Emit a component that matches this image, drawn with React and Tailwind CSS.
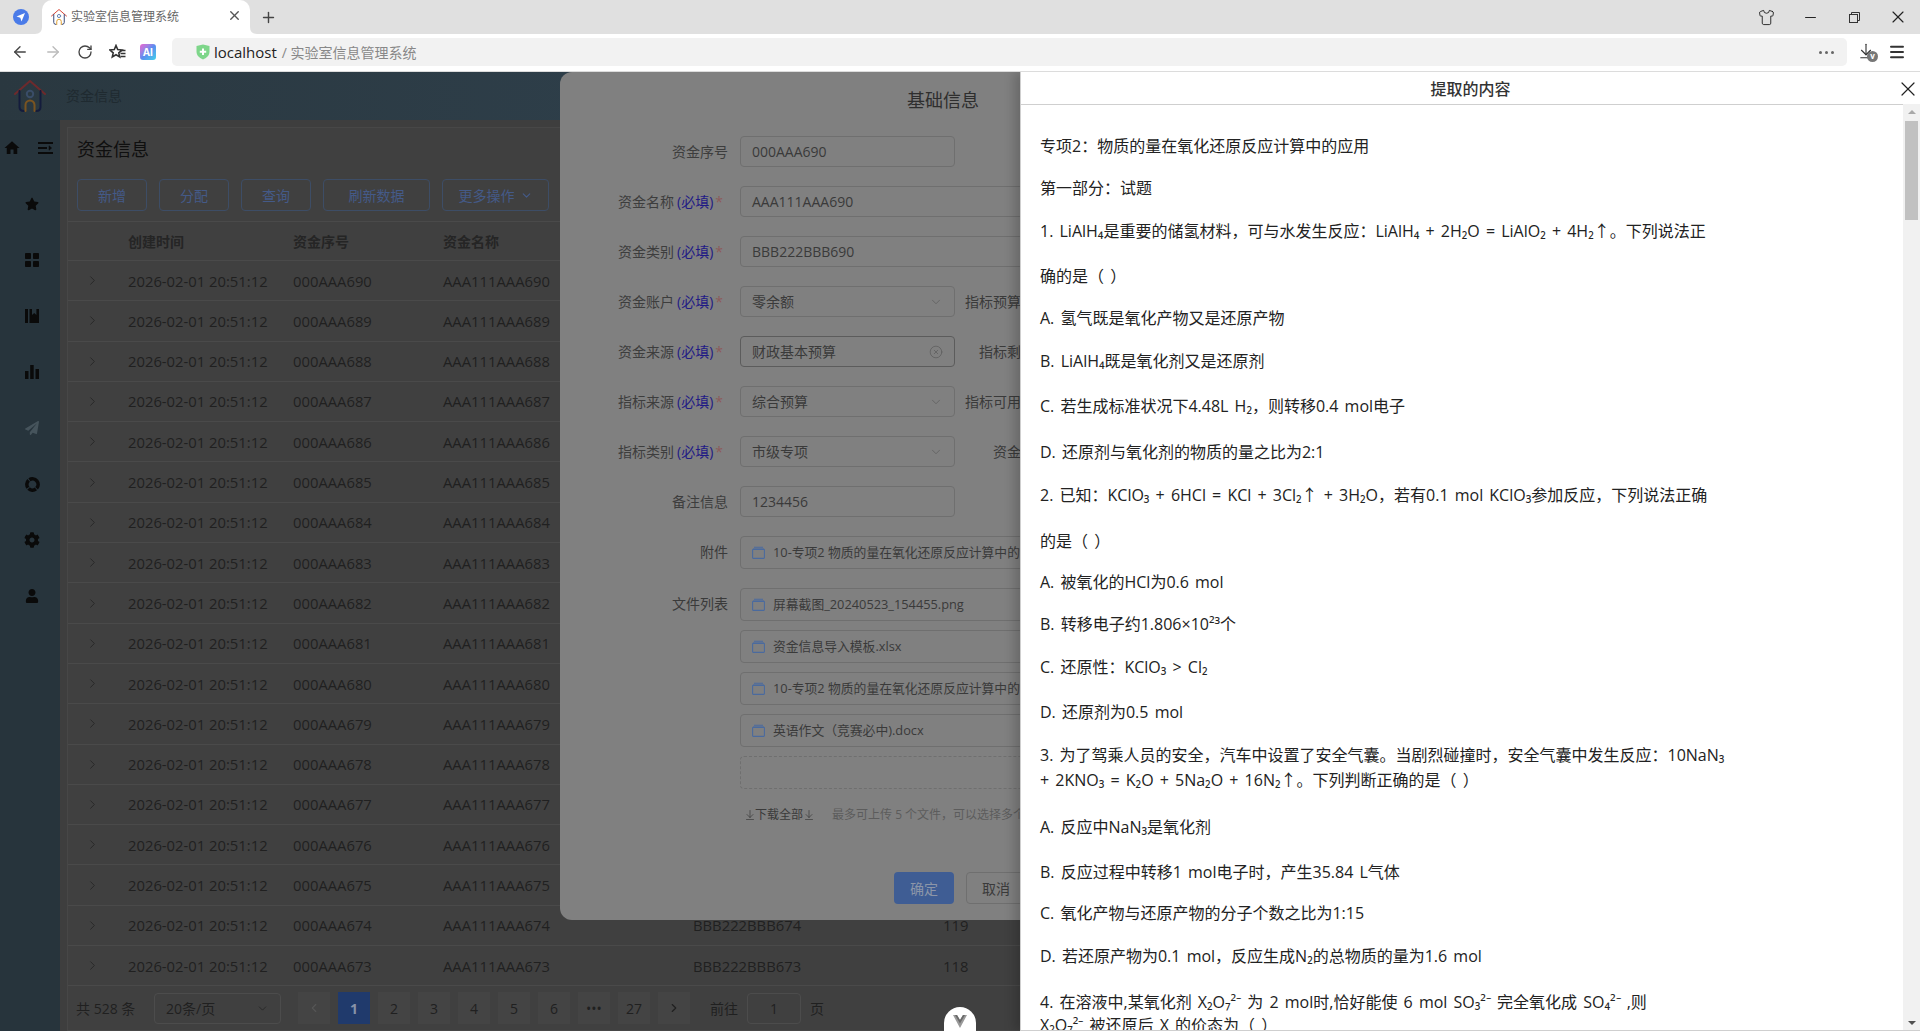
import { ArrowLeft, ArrowRight, RotateCw, Plus, X, Shirt, Minus, Menu, ChevronRight, ChevronLeft, ChevronDown, CircleX, ArrowDownToLine } from "lucide-react"
import { FaStar, FaCog, FaUser, FaPaperPlane } from "react-icons/fa"
import { MdHome } from "react-icons/md"

const Logo = ({ size, roof, wall, door, dot }) => (
    <svg width={size} height={size} viewBox="0 0 32 32" fill="none" strokeWidth="2" strokeLinecap="round">
        <path d="M1 14 L16 1 L31 14" stroke={roof} />
        <path d="M5.5 11 V27 Q5.5 31 10 31 M26.5 11 V27 Q26.5 31 22 31" stroke={wall} />
        <path d="M11.5 31 V25 A4.5 4.5 0 0 1 20.5 25 V31" stroke={door} />
        <circle cx="16" cy="14" r="3.2" stroke={dot} />
    </svg>
)

const TabStrip = () => (
    <div className="h-[34px] bg-[#e0e0e0] flex items-end relative shrink-0">
        <div className="w-[42px] h-[34px] flex items-center justify-center">
            <svg width="16" height="16" viewBox="0 0 16 16">
                <circle cx="8" cy="8" r="8" fill="#4a7be8" />
                <path d="M12 4 L3.5 7.5 L7.3 8.7 L8.5 12.5 Z" fill="#fff" />
            </svg>
        </div>
        <div className="relative w-[208px] h-[34px] bg-white rounded-t-[10px] flex items-center pl-[9px] pr-[8px]">
            <svg className="absolute left-[-7px] bottom-0" width="7" height="7" viewBox="0 0 7 7"><path d="M7 0 V7 H0 Q7 7 7 0Z" fill="#fff" /></svg>
            <svg className="absolute right-[-7px] bottom-0" width="7" height="7" viewBox="0 0 7 7"><path d="M0 0 V7 H7 Q0 7 0 0Z" fill="#fff" /></svg>
            <Logo size={16} roof="#d9483b" wall="#3a4a78" door="#e0a030" dot="#6a86b8" />
            <span className="ml-[4px] mb-[1px] text-[12px] text-[#666]">实验室信息管理系统</span>
            <X size={15} strokeWidth={2.2} className="ml-auto mb-[4px] text-[#555]" />
        </div>
        <div className="ml-[10px] h-[34px] flex items-center"><Plus size={17} strokeWidth={2} className="text-[#444]" /></div>
        <div className="ml-auto h-[34px] flex items-center text-[#222]">
            <div className="w-[44px] flex justify-center"><Shirt size={17} strokeWidth={1.3} /></div>
            <div className="w-[44px] flex justify-center"><Minus size={17} strokeWidth={1.4} /></div>
            <div className="w-[44px] flex justify-center">
                <svg width="11" height="11" viewBox="0 0 11 11" fill="none" stroke="#333"><rect x="0.5" y="2.5" width="8" height="8" /><path d="M2.5 2.5 V0.5 H10.5 V8.5 H8.5" /></svg>
            </div>
            <div className="w-[44px] flex justify-center"><X size={20} strokeWidth={1.4} /></div>
        </div>
    </div>
)

const Toolbar = () => (
    <div className="h-[38px] bg-white border-b border-[#dcdcdc] pb-[1px] flex items-center shrink-0">
        <div className="w-[172px] flex items-center pl-[11px] text-[#444]">
            <ArrowLeft size={18} strokeWidth={1.8} />
            <ArrowRight size={18} strokeWidth={1.8} className="ml-[15px] text-[#bbb]" />
            <RotateCw size={16} strokeWidth={2} className="ml-[15px]" />
            <svg className="ml-[16px]" width="17" height="16" viewBox="0 0 17 16" fill="none" stroke="#333" strokeWidth="1.6">
                <path d="M7 1.5 L8.7 5.5 L13 6 L9.8 8.8 L10.7 13 L7 10.8 L3.3 13 L4.2 8.8 L1 6 L5.3 5.5 Z" />
                <path d="M11 6.5 H16.5 M11.5 9.5 H16.5 M11.5 12.5 H16.5" />
            </svg>
            <div className="ml-[14px] w-[16px] h-[16px] rounded-[3px] bg-gradient-to-br from-[#e85fd0] via-[#5a8cf0] to-[#3ed0e8] flex items-center justify-center text-white text-[10px] font-bold leading-none">AI</div>
        </div>
        <div className="w-[1675px] h-[28px] bg-[#f2f2f2] rounded-[5px] flex items-center pl-[24px]">
            <svg width="14" height="16" viewBox="0 0 14 16">
                <path d="M0.5 2 L7 0.5 L13.5 2 V8 Q13.5 13 7 15.5 Q0.5 13 0.5 8 Z" fill="#7ed68a" />
                <path d="M7 4.5 V11 M3.8 7.8 H10.2" stroke="#fff" strokeWidth="2" />
            </svg>
            <span className="ml-[4px] text-[15px] text-[#222]">localhost</span>
            <span className="ml-[5px] text-[14px] text-[#888]">/ 实验室信息管理系统</span>
            <div className="ml-auto mr-[13px] flex gap-[3px]">
                <i className="w-[3px] h-[3px] rounded-full bg-[#666]" />
                <i className="w-[3px] h-[3px] rounded-full bg-[#666]" />
                <i className="w-[3px] h-[3px] rounded-full bg-[#666]" />
            </div>
        </div>
        <div className="flex-1 flex items-center pl-[10px]">
            <div className="relative w-[20px] h-[20px]">
                <ArrowDownToLine size={18} strokeWidth={1.5} className="text-[#333]" />
                <span className="absolute right-[-1px] bottom-0 w-[11px] h-[11px] rounded-full bg-[#777] text-white text-[8px] font-bold leading-[10px] text-center">v</span>
            </div>
            <Menu size={18} strokeWidth={2.6} className="ml-[11px] text-[#333]" />
        </div>
    </div>
)

const BookIcon = () => (
    <svg width="14" height="14" viewBox="0 0 14 14" fill="#0a0a0a">
        <rect x="0" y="0" width="3" height="14" />
        <path d="M4.5 0 H14 V14 H4.5 Z M7 0 V6 L9.2 4 L11.4 6 V0 Z" fillRule="evenodd" />
    </svg>
)

const BarsIcon = () => (
    <svg width="14" height="14" viewBox="0 0 14 14" fill="#0a0a0a">
        <rect x="0" y="6" width="3.5" height="8" />
        <rect x="5.2" y="0" width="3.5" height="14" />
        <rect x="10.5" y="4" width="3.5" height="10" />
    </svg>
)

const GridIcon = () => (
    <svg width="14" height="14" viewBox="0 0 14 14" fill="#0a0a0a">
        <rect x="0" y="0" width="6" height="6" rx="0.8" />
        <rect x="8" y="0" width="6" height="6" rx="0.8" />
        <rect x="0" y="8" width="6" height="6" rx="0.8" />
        <rect x="8" y="8" width="6" height="6" rx="0.8" />
    </svg>
)

const RingIcon = () => (
    <svg width="15" height="15" viewBox="0 0 15 15" fill="none" stroke="#0a0a0a" strokeWidth="3.6">
        <circle cx="7.5" cy="7.5" r="5.6" strokeDasharray="7.8 1" transform="rotate(-40 7.5 7.5)" />
    </svg>
)

const Sidebar = () => {
    const items = [
        <FaStar size={14} />,
        <GridIcon />,
        <BookIcon />,
        <BarsIcon />,
        <FaPaperPlane size={14} className="text-[#46545c]" />,
        <RingIcon />,
        <FaCog size={16} />,
        <FaUser size={14} />,
    ]
    return (
        <div className="w-[60px] shrink-0 bg-[#27343c] text-[#0a0a0a]">
            <div className="h-14 flex items-center justify-between pl-[3px] pr-[7px]">
                <MdHome size={18} />
                <svg width="15" height="12" viewBox="0 0 15 12" fill="none" stroke="#0a0a0a" strokeWidth="2">
                    <path d="M0 1 H15 M0 6 H9 M0 11 H15" />
                    <path d="M11 3.8 L13.6 6 L11 8.2 Z" fill="#0a0a0a" strokeWidth="0.5" />
                </svg>
            </div>
            {items.map((icon, i) => (
                <div key={i} className="h-14 flex items-center justify-center pl-1">{icon}</div>
            ))}
        </div>
    )
}

const rows = Array.from({ length: 18 }, (_, i) => 690 - i)
const pages = ["2", "3", "4", "5", "6", "•••", "27"]

const FundTable = () => (
    <div className="flex-1 ml-[7px] mt-[7px] bg-[#404040] border border-[#474747] text-[#202020] overflow-hidden">
        <div className="h-[43px] flex items-center pl-[9px] text-[18px] text-[#0f0f0f]">资金信息</div>
        <div className="mt-[8px] h-[32px] pl-[9px] flex gap-3 text-[14px] text-[#445a88]">
            <div className="w-[70px] flex items-center justify-center border border-[#3d4d66] rounded-[4px]">新增</div>
            <div className="w-[70px] flex items-center justify-center border border-[#3d4d66] rounded-[4px]">分配</div>
            <div className="w-[70px] flex items-center justify-center border border-[#3d4d66] rounded-[4px]">查询</div>
            <div className="w-[107px] flex items-center justify-center border border-[#3d4d66] rounded-[4px]">刷新数据</div>
            <div className="w-[107px] flex items-center justify-center border border-[#3d4d66] rounded-[4px]">更多操作<ChevronDown size={13} className="ml-[5px]" /></div>
        </div>
        <div className="mt-[10px] h-[40px] grid grid-cols-[60px_165px_150px_250px_250px_1fr] items-center border-y border-[#4a4a4a] text-[14px] font-bold text-[#252525]">
            <span />
            <span>创建时间</span>
            <span>资金序号</span>
            <span>资金名称</span>
            <span>资金类别</span>
            <span>指标预算</span>
        </div>
        {rows.map((n) => (
            <div key={n} className="h-[40.3px] grid grid-cols-[60px_165px_150px_250px_250px_1fr] items-center border-b border-[#4a4a4a] text-[14.8px]">
                <ChevronRight size={15} strokeWidth={1.2} className="ml-[17px]" />
                <span>2026-02-01 20:51:12</span>
                <span>000AAA{n}</span>
                <span>AAA111AAA{n}</span>
                <span>BBB222BBB{n}</span>
                <span>{n - 555}</span>
            </div>
        ))}
        <div className="mt-[6px] flex items-center h-[32px] pl-[8px] text-[14px]">
            <span className="w-[78px]">共 528 条</span>
            <div className="w-[127px] h-[31px] border border-[#4c4c4c] rounded-[4px] flex items-center justify-between px-[11px]">
                <span>20条/页</span>
                <ChevronDown size={13} strokeWidth={1.3} />
            </div>
            <div className="ml-[17px] flex gap-2">
                <div className="w-8 h-8 bg-[#444] flex items-center justify-center text-[#555]"><ChevronLeft size={14} /></div>
                <div className="w-8 h-8 bg-[#203a6c] flex items-center justify-center text-[#8793a8] font-bold">1</div>
                {pages.map((p) => (
                    <div key={p} className="w-8 h-8 bg-[#444] flex items-center justify-center font-normal">{p}</div>
                ))}
                <div className="w-8 h-8 bg-[#444] flex items-center justify-center"><ChevronRight size={14} /></div>
            </div>
            <span className="ml-[20px]">前往</span>
            <div className="ml-[9px] w-[54px] h-[31px] border border-[#4c4c4c] rounded-[4px] flex items-center justify-center">1</div>
            <span className="ml-[9px]">页</span>
        </div>
    </div>
)

const Required = () => (
    <>
        <span className="ml-[3px] text-[#1f1a85]">(必填)</span>
        <span className="ml-[2px] text-[#8d5a5a]">*</span>
        <span className="w-[5px]" />
    </>
)

const Field = ({ label, required, wide, side, sideGap, clear, select, value }) => (
    <div className="flex items-center h-[31px] mb-[19px] whitespace-nowrap">
        <div className="w-[168px] shrink-0 flex justify-end items-center text-[#3d3d3d]">
            {label}
            {required && <Required />}
        </div>
        <div className={`ml-3 h-[31px] shrink-0 border rounded-[4px] flex items-center pl-[11px] pr-[11px] ${wide ? "w-[400px]" : "w-[215px]"} ${clear ? "border-[#5c5c5c]" : "border-[#6f6f6f]"}`}>
            <span>{value}</span>
            {select && <ChevronDown size={14} strokeWidth={1.2} className="ml-auto text-[#5a5a5a]" />}
            {clear && <CircleX size={14} strokeWidth={1.2} className="ml-auto text-[#5a5a5a]" />}
        </div>
        {side && <span className={`shrink-0 ${sideGap}`}>{side}</span>}
    </div>
)

const FileIcon = () => (
    <svg width="13" height="13" viewBox="0 0 13 13" fill="none" stroke="#4a6a9e" strokeWidth="1.1" className="shrink-0">
        <rect x="0.6" y="3.4" width="11.8" height="9" rx="0.6" />
        <path d="M2 1.2 H11 M1 3 H12" />
    </svg>
)

const FileRow = ({ name, cls }) => (
    <div className={`h-[33px] w-[400px] ml-[180px] border border-[#6f6f6f] rounded-[4px] flex items-center pl-[11px] text-[12.8px] whitespace-nowrap overflow-hidden ${cls}`}>
        <FileIcon />
        <span className="ml-[8px]">{name}</span>
    </div>
)

const longFile = "10-专项2 物质的量在氧化还原反应计算中的应用.pdf"

const Dialog = () => (
    <div className="absolute left-[560px] top-0 w-[460px] h-[848px] bg-[#808080] rounded-l-[12px] overflow-hidden text-[14px] text-[#3a3a3a]">
        <div className="h-[56px] flex items-center pl-[347px] text-[18px] text-[#2e2e2e] whitespace-nowrap">基础信息</div>
        <div className="pt-2">
            <Field label="资金序号" value="000AAA690" />
            <Field label="资金名称" required wide value="AAA111AAA690" />
            <Field label="资金类别" required wide value="BBB222BBB690" />
            <Field label="资金账户" required select value="零余额" side="指标预算金额" sideGap="ml-[10px]" />
            <Field label="资金来源" required clear value="财政基本预算" side="指标剩余金额" sideGap="ml-[24px]" />
            <Field label="指标来源" required select value="综合预算" side="指标可用金额" sideGap="ml-[10px]" />
            <Field label="指标类别" required select value="市级专项" side="资金状态" sideGap="ml-[38px]" />
            <Field label="备注信息" value="1234456" />
            <div className="relative">
                <span className="absolute left-[104px] top-[5px] w-[64px] text-right">附件</span>
                <FileRow name={longFile} cls="mb-[19px]" />
                <span className="absolute left-[104px] top-[57px] w-[64px] text-right">文件列表</span>
                <FileRow name="屏幕截图_20240523_154455.png" cls="mb-[9px]" />
                <FileRow name="资金信息导入模板.xlsx" cls="mb-[9px]" />
                <FileRow name={longFile} cls="mb-[9px]" />
                <FileRow name="英语作文（竞赛必中).docx" cls="mb-[9px]" />
                <div className="h-[33px] w-[400px] ml-[180px] border border-dashed border-[#6f6f6f] rounded-[4px]" />
            </div>
            <div className="mt-[16px] h-[20px] ml-[184px] flex items-center whitespace-nowrap">
                <ArrowDownToLine size={12} strokeWidth={1.4} className="shrink-0" />
                <span className="text-[12px] ml-[-1px]">下载全部</span>
                <ArrowDownToLine size={12} strokeWidth={1.4} className="shrink-0" />
                <span className="ml-[17px] text-[12px] text-[#5c5c5c]">最多可上传 5 个文件，可以选择多个文件上传</span>
            </div>
            <div className="mt-[47px] ml-[334px] flex gap-3">
                <div className="w-[60px] h-[32px] shrink-0 bg-[#3f5d94] rounded-[4px] flex items-center justify-center text-[#8c96a8]">确定</div>
                <div className="w-[60px] h-[32px] shrink-0 border border-[#6f6f6f] rounded-[4px] flex items-center justify-center">取消</div>
            </div>
        </div>
    </div>
)

const lines = [
    { t: "专项2：物质的量在氧化还原反应计算中的应用", c: "mt-[29px]" },
    { t: "第一部分：试题", c: "mt-[17px]" },
    { t: "1. LiAlH₄是重要的储氢材料，可与水发生反应：LiAlH₄ + 2H₂O = LiAlO₂ + 4H₂↑。下列说法正", c: "mt-[18px]" },
    { t: "确的是（ ）", c: "mt-[20px]" },
    { t: "A. 氢气既是氧化产物又是还原产物", c: "mt-[17px]" },
    { t: "B. LiAlH₄既是氧化剂又是还原剂", c: "mt-[18px]" },
    { t: "C. 若生成标准状况下4.48L H₂，则转移0.4 mol电子", c: "mt-[20px]" },
    { t: "D. 还原剂与氧化剂的物质的量之比为2:1", c: "mt-[21px]" },
    { t: "2. 已知：KClO₃ + 6HCl = KCl + 3Cl₂↑ + 3H₂O，若有0.1 mol KClO₃参加反应，下列说法正确", c: "mt-[18px]" },
    { t: "的是（ ）", c: "mt-[21px]" },
    { t: "A. 被氧化的HCl为0.6 mol", c: "mt-[16px]" },
    { t: "B. 转移电子约1.806×10²³个", c: "mt-[17px]" },
    { t: "C. 还原性：KClO₃ > Cl₂", c: "mt-[18px]" },
    { t: "D. 还原剂为0.5 mol", c: "mt-[20px]" },
    { t: "3. 为了驾乘人员的安全，汽车中设置了安全气囊。当剧烈碰撞时，安全气囊中发生反应：10NaN₃", c: "mt-[18px]" },
    { t: "+ 2KNO₃ = K₂O + 5Na₂O + 16N₂↑。下列判断正确的是（ ）", c: "mt-0" },
    { t: "A. 反应中NaN₃是氧化剂", c: "mt-[22px]" },
    { t: "B. 反应过程中转移1 mol电子时，产生35.84 L气体", c: "mt-[20px]" },
    { t: "C. 氧化产物与还原产物的分子个数之比为1:15", c: "mt-[16px]" },
    { t: "D. 若还原产物为0.1 mol，反应生成N₂的总物质的量为1.6 mol", c: "mt-[18px]" },
    { t: "4. 在溶液中,某氧化剂 X₂O₇²⁻ 为 2 mol时,恰好能使 6 mol SO₃²⁻ 完全氧化成 SO₄²⁻ ,则", c: "mt-[21px]" },
    { t: "X₂O₇²⁻ 被还原后 X 的价态为（ ）", c: "mt-[-2px]" },
]

const Panel = () => (
    <div className="absolute left-[1020px] top-0 bottom-0 w-[900px] bg-white border-l border-b border-[#cfcfcf] shadow-[-6px_0_10px_rgba(0,0,0,0.18)] flex flex-col">
        <div className="h-[32px] pt-[2px] shrink-0 flex items-center justify-center relative text-[16px] font-medium text-[#333]">
            <span>提取的内容</span>
            <X size={24} strokeWidth={1.2} className="absolute right-0 top-[5px] text-[#222]" />
        </div>
        <div className="flex-1 min-h-0 flex">
            <div className="flex-1 border-t border-[#cfcfcf] pl-[19px] overflow-hidden text-[16px] text-[#222] whitespace-nowrap [word-spacing:2px]">
                {lines.map((l) => (
                    <p key={l.t} className={`leading-[25px] ${l.c}`}>{l.t}</p>
                ))}
            </div>
            <div className="w-[17px] bg-[#f1f1f1] flex flex-col items-center relative">
                <div className="mt-[6px] w-0 h-0 border-x-[4px] border-x-transparent border-b-[4px] border-b-[#a8a8a8]" />
                <div className="mt-[7px] w-[13px] h-[99px] bg-[#c1c1c1]" />
                <div className="mt-auto mb-[5px] w-0 h-0 border-x-[4px] border-x-transparent border-t-[4px] border-t-[#505050]" />
            </div>
        </div>
    </div>
)

const DevtoolsBubble = () => (
    <div className="absolute left-[944px] bottom-0 w-[32px] h-[24px] bg-white rounded-t-full flex justify-center pt-[8px]">
        <svg width="14" height="13" viewBox="0 0 14 13">
            <path d="M0 0 H4 L7 5 L10 0 H14 L7 13 Z" fill="#9a9a9a" />
            <path d="M4 0 L7 5 L10 0 H12 L7 8.5 L2 0 Z" fill="#6a6a6a" />
        </svg>
    </div>
)

const App = () => {
    return (
        <div className="h-screen w-full flex flex-col overflow-hidden font-['Open_Sans','Noto_Sans_CJK_SC',sans-serif]">
            <TabStrip />
            <Toolbar />
            <div className="relative flex-1 min-h-0 overflow-hidden bg-[#3e3e3e]">
                <div className="h-12 bg-gradient-to-r from-[#2a3840] to-[#364c5e] flex items-center pl-[14px] text-[14px] text-[#1f2a30]">
                    <Logo size={32} roof="#6e2a2c" wall="#141c3c" door="#7a5420" dot="#3a4d68" />
                    <span className="ml-[20px] mb-[1px]">资金信息</span>
                </div>
                <div className="flex h-[911px]">
                    <Sidebar />
                    <FundTable />
                </div>
                <Dialog />
                <Panel />
                <DevtoolsBubble />
            </div>
        </div>
    )
}

export default App
